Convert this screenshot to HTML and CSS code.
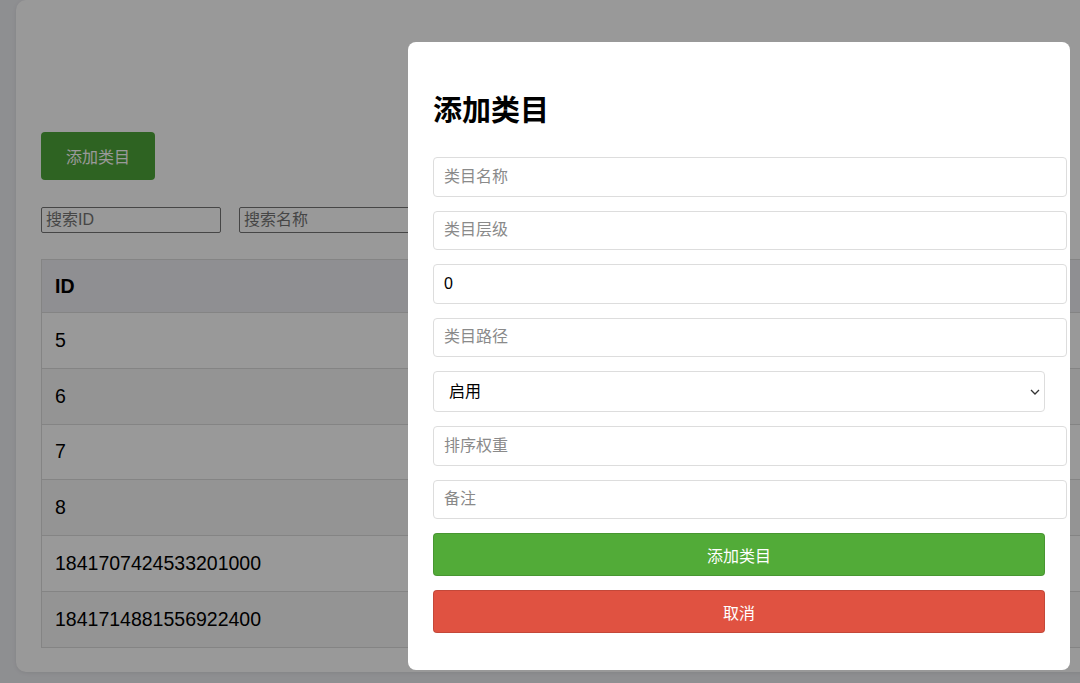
FILE: index.html
```html
<!DOCTYPE html>
<html lang="zh">
<head>
<meta charset="utf-8">
<title>类目管理</title>
<link rel="stylesheet" href="styles.css">
</head>
<body>
<div class="page">
  <div class="card">
    <button class="btn-add">添加类目</button>
    <div class="search">
      <input class="search-input" type="text" placeholder="搜索ID">
      <input class="search-input" type="text" placeholder="搜索名称">
    </div>
    <table class="list">
      <thead>
        <tr><th>ID</th></tr>
      </thead>
      <tbody>
        <tr><td>5</td></tr>
        <tr><td>6</td></tr>
        <tr><td>7</td></tr>
        <tr><td>8</td></tr>
        <tr><td>1841707424533201000</td></tr>
        <tr><td>1841714881556922400</td></tr>
      </tbody>
    </table>
  </div>
</div>
<div class="overlay"></div>
<div class="modal">
  <h2 class="modal-title">添加类目</h2>
  <form class="modal-form">
    <input class="field" type="text" placeholder="类目名称">
    <input class="field" type="text" placeholder="类目层级">
    <input class="field" type="text" value="0">
    <input class="field" type="text" placeholder="类目路径">
    <select class="field-select">
      <option>启用</option>
      <option>禁用</option>
    </select>
    <input class="field" type="text" placeholder="排序权重">
    <input class="field" type="text" placeholder="备注">
    <button type="button" class="btn-submit">添加类目</button>
    <button type="button" class="btn-cancel">取消</button>
  </form>
</div>
</body>
</html>
```
FILE: styles.css
```css
* { box-sizing: border-box; }
html, body {
  margin: 0;
  height: 683px;
  overflow: hidden;
}
body {
  background: #edeef2;
  font-family: "Liberation Sans", "Noto Sans CJK SC", sans-serif;
  color: #000;
}
.page {
  padding: 0 0 0 16px;
}
.card {
  width: 1110px;
  height: 672px;
  background: #fff;
  border-radius: 10px;
  box-shadow: 0 1px 4px rgba(0,0,0,0.08);
  padding: 132px 0 0 25px;
}
.btn-add {
  display: block;
  width: 114px;
  height: 48px;
  border: none;
  border-radius: 4px;
  background: #4ea539;
  color: #fff;
  font-family: inherit;
  font-size: 16px;
}
.search {
  display: flex;
  gap: 18px;
  margin-top: 27px;
}
.search-input {
  width: 180px;
  height: 26px;
  border: 1px solid #767676;
  border-radius: 2px;
  padding: 1px 4px;
  font-family: inherit;
  font-size: 16px;
  background: #fff;
}
.search-input::placeholder { color: #757575; }
.list {
  margin-top: 26px;
  width: 1060px;
  border-collapse: collapse;
  font-size: 19.5px;
}
.list th, .list td {
  border: 1px solid #dddddd;
  text-align: left;
  padding: 0 13px;
}
.list th {
  height: 53px;
  background: #eeeff3;
  font-weight: bold;
}
.list td {
  height: 55.8px;
}
.list tbody tr:nth-child(even) td { background: #f7f7f7; }
.overlay {
  position: fixed;
  inset: 0;
  background: rgba(0,0,0,0.4);
}
.modal {
  position: fixed;
  left: 408px;
  top: 42px;
  width: 662px;
  height: 628px;
  background: #fff;
  border-radius: 8px;
  padding: 25px;
}
.modal-title {
  margin: 23px 0 25px;
  font-size: 29px;
  line-height: 42px;
  font-weight: bold;
}
.modal-form {
  display: flex;
  flex-direction: column;
  gap: 14px;
}
.field {
  box-sizing: content-box;
  width: 100%;
  padding: 10px;
  border: 1px solid #dddddd;
  border-radius: 4px;
  font-family: inherit;
  font-size: 16px;
  line-height: 17.5px;
  height: 17.5px;
  color: #000;
  background: #fff;
}
.field::placeholder { color: #8a8a8a; }
.field-select {
  width: 100%;
  height: 41px;
  border: 1px solid #dddddd;
  border-radius: 4px;
  padding: 0 30px 0 15px;
  font-family: inherit;
  font-size: 16px;
  color: #000;
  appearance: none;
  -webkit-appearance: none;
  background: #fff url("data:image/svg+xml,%3Csvg xmlns='http://www.w3.org/2000/svg' width='10' height='6' viewBox='0 0 10 6'%3E%3Cpath d='M1 1l4 4 4-4' fill='none' stroke='%23333' stroke-width='1.3'/%3E%3C/svg%3E") no-repeat right 4px center;
}
.btn-submit, .btn-cancel {
  width: 100%;
  height: 43px;
  border: 1px solid rgba(0,0,0,0.12);
  border-radius: 4px;
  color: #fff;
  font-family: inherit;
  font-size: 16px;
}
.btn-submit { background: #52ab38; }
.btn-cancel { background: #e05241; }
```
